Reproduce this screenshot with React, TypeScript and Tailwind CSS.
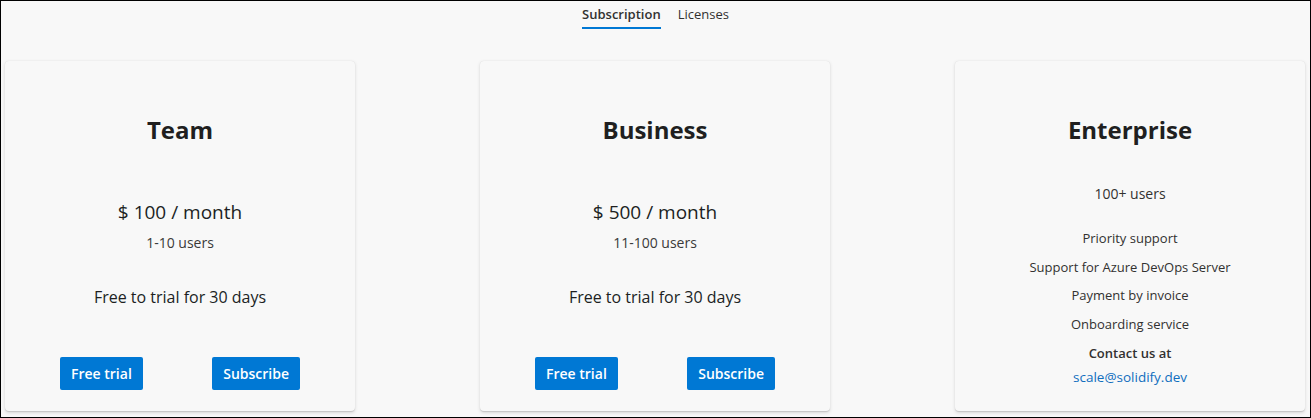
import React from 'react';

const font = { fontFamily: '"Open Sans", "Noto Sans", Arial, sans-serif' };

function Button({ label }: { label: string }) {
  return (
    <button className="h-[33px] px-[11px] rounded-[2px] bg-[#0078d4] text-white text-[14px] font-semibold leading-[33px]">
      {label}
    </button>
  );
}

function PlanCard({ title, price, users }: { title: string; price: string; users: string }) {
  return (
    <div className="w-[350px] h-[350px] rounded-[4px] bg-[#f8f8f8] shadow-[0_1.6px_3.6px_rgba(0,0,0,0.13),0_0.3px_0.9px_rgba(0,0,0,0.11)] flex flex-col items-center pt-[53px]">
      <div className="h-8 leading-8 text-[24px] font-bold text-[#201f1f]">{title}</div>
      <div className="mt-[52px] h-7 leading-7 text-[19px] text-[#201f1f]">{price}</div>
      <div className="mt-[7px] h-5 leading-5 text-[14px] text-[#3b3a39]">{users}</div>
      <div className="mt-8 h-6 leading-6 text-[16px] text-[#201f1f]">Free to trial for 30 days</div>
      <div className="mt-[48px] w-full px-[55px] flex justify-between">
        <Button label="Free trial" />
        <Button label="Subscribe" />
      </div>
    </div>
  );
}

function EnterpriseCard() {
  const features = ['Priority support', 'Support for Azure DevOps Server', 'Payment by invoice', 'Onboarding service'];
  return (
    <div className="w-[350px] h-[350px] rounded-[4px] bg-[#f8f8f8] shadow-[0_1.6px_3.6px_rgba(0,0,0,0.13),0_0.3px_0.9px_rgba(0,0,0,0.11)] flex flex-col items-center pt-[53px]">
      <div className="h-8 leading-8 text-[24px] font-bold text-[#201f1f]">Enterprise</div>
      <div className="mt-[38px] h-5 leading-5 text-[14px] text-[#323130]">100+ users</div>
      <div className="mt-6 flex flex-col items-center gap-[8.5px]">
        {features.map((f) => (
          <div key={f} className="h-5 leading-5 text-[13px] text-[#323130]">{f}</div>
        ))}
      </div>
      <div className="mt-[9px] h-5 leading-5 text-[13px] font-semibold text-[#323130]">Contact us at</div>
      <a className="mt-1 h-5 leading-5 text-[13.5px] text-[#106ebe]" href="#">scale@solidify.dev</a>
    </div>
  );
}

export default function App() {
  return (
    <div style={font} className="w-[1311px] h-[418px] border border-black bg-[#f8f8f8] flex flex-col">
      {/* Tabs */}
      <div className="pt-[3px] flex justify-center gap-[17px] text-[13px] leading-5">
        <div className="pb-[3px] border-b-2 border-[#0078d4] font-semibold text-[#323130]">Subscription</div>
        <div className="pb-[3px] border-b-2 border-transparent text-[#323130]">Licenses</div>
      </div>

      {/* Plans */}
      <div className="mt-[32px] pl-1 pr-[5px] flex justify-between">
        <PlanCard title="Team" price="$ 100 / month" users="1-10 users" />
        <PlanCard title="Business" price="$ 500 / month" users="11-100 users" />
        <EnterpriseCard />
      </div>
    </div>
  );
}
